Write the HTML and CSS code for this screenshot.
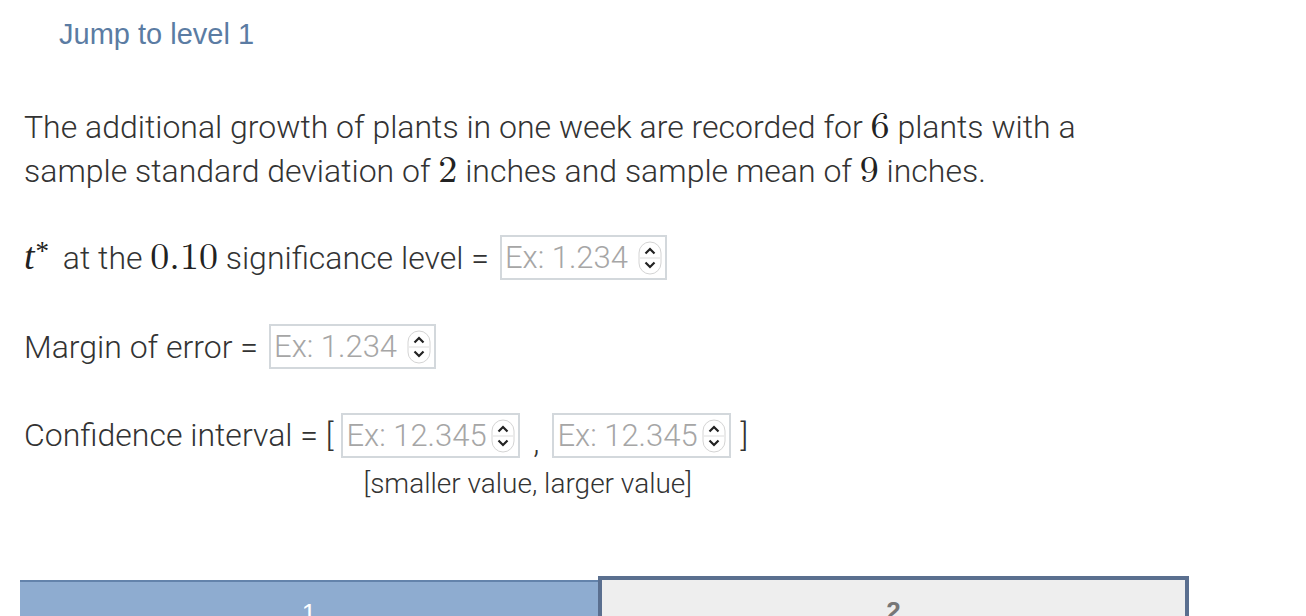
FILE: index.html
```html
<!DOCTYPE html>
<html>
<head>
<meta charset="utf-8">
<link rel="stylesheet" href="styles.css">
</head>
<body>
<div class="page">
  <div class="jump"><a class="jump-link">Jump to level 1</a></div>
  <p class="prompt">The additional growth of plants in one week are recorded for <span class="m">6</span> plants with a<br>sample standard deviation of <span class="m">2</span> inches and sample mean of <span class="m">9</span> inches.</p>

  <div class="row row-t">
    <span class="label"><span class="mi">t</span><sup class="star">*</sup> at the <span class="m">0.10</span> significance level =</span>
    <div class="field w1">
      <span class="ph">Ex: 1.234</span>
      <svg class="spin" viewBox="0 0 24 34" width="24" height="34"><rect x="1" y="1" width="22" height="32" rx="11" fill="#fff" stroke="#d4d4d4"/><line x1="2" y1="17" x2="22" y2="17" stroke="#ddd"/><path d="M7.5 12.5 L12 8 L16.5 12.5" fill="none" stroke="#222" stroke-width="2.2"/><path d="M7.5 21.5 L12 26 L16.5 21.5" fill="none" stroke="#222" stroke-width="2.2"/></svg>
    </div>
  </div>

  <div class="row row-m">
    <span class="label">Margin of error =</span>
    <div class="field w1">
      <span class="ph">Ex: 1.234</span>
      <svg class="spin" viewBox="0 0 24 34" width="24" height="34"><rect x="1" y="1" width="22" height="32" rx="11" fill="#fff" stroke="#d4d4d4"/><line x1="2" y1="17" x2="22" y2="17" stroke="#ddd"/><path d="M7.5 12.5 L12 8 L16.5 12.5" fill="none" stroke="#222" stroke-width="2.2"/><path d="M7.5 21.5 L12 26 L16.5 21.5" fill="none" stroke="#222" stroke-width="2.2"/></svg>
    </div>
  </div>

  <div class="row row-c">
    <span class="label lab-c">Confidence interval = [</span>
    <div class="pair">
      <div class="fields">
        <div class="field w2">
          <span class="ph">Ex: 12.345</span>
          <svg class="spin" viewBox="0 0 24 34" width="24" height="34"><rect x="1" y="1" width="22" height="32" rx="11" fill="#fff" stroke="#d4d4d4"/><line x1="2" y1="17" x2="22" y2="17" stroke="#ddd"/><path d="M7.5 12.5 L12 8 L16.5 12.5" fill="none" stroke="#222" stroke-width="2.2"/><path d="M7.5 21.5 L12 26 L16.5 21.5" fill="none" stroke="#222" stroke-width="2.2"/></svg>
        </div>
        <span class="comma">,</span>
        <div class="field w2">
          <span class="ph">Ex: 12.345</span>
          <svg class="spin" viewBox="0 0 24 34" width="24" height="34"><rect x="1" y="1" width="22" height="32" rx="11" fill="#fff" stroke="#d4d4d4"/><line x1="2" y1="17" x2="22" y2="17" stroke="#ddd"/><path d="M7.5 12.5 L12 8 L16.5 12.5" fill="none" stroke="#222" stroke-width="2.2"/><path d="M7.5 21.5 L12 26 L16.5 21.5" fill="none" stroke="#222" stroke-width="2.2"/></svg>
        </div>
        <span class="close">]</span>
      </div>
      <div class="hint">[smaller value, larger value]</div>
    </div>
  </div>

  <div class="tabs">
    <div class="tab tab-done">1</div>
    <div class="tab tab-current">2</div>
  </div>
</div>
</body>
</html>
```

FILE: styles.css
```css
html, body {
  margin: 0;
  padding: 0;
  background: #fff;
  overflow: hidden;
}
.page {
  width: 1306px;
  height: 616px;
  overflow: hidden;
  font-family: Roboto, "Liberation Sans", sans-serif;
  font-weight: 300;
  color: #333;
  font-size: 32px;
}
.jump {
  padding: 14px 0 0 59px;
  height: 43px;
}
.jump-link {
  font-family: "Liberation Sans", Arial, sans-serif;
  font-weight: 400;
  font-size: 29px;
  color: #5b7ca3;
  line-height: 34px;
}
.prompt {
  margin: 48px 0 0 24px;
  width: 1200px;
  line-height: 44px;
}
.m {
  font-family: "Latin Modern Roman", "Liberation Serif", serif;
  font-weight: 400;
  font-size: 38px;
  line-height: 0;
  color: #222;
}
.mi {
  font-family: "Liberation Serif", serif;
  font-style: italic;
  font-weight: 400;
  font-size: 38px;
  line-height: 0;
  color: #222;
}
.star {
  font-family: "Liberation Serif", serif;
  font-weight: 400;
  font-size: 27px;
  vertical-align: 9px;
  line-height: 0;
  margin-left: 1px;
  margin-right: 6px;
  color: #222;
}
.row {
  display: flex;
  align-items: center;
  padding-left: 24px;
}
.row-t { margin-top: 42px; }
.row-m { margin-top: 44px; }
.row-c { margin-top: 44px; align-items: flex-start; }
.lab-c { height: 45px; line-height: 45px; }
.label { white-space: nowrap; }
.field {
  box-sizing: border-box;
  height: 45px;
  border: 2px solid #d3d8dc;
  display: flex;
  align-items: center;
  justify-content: space-between;
  padding: 0 3px 0 3px;
  margin-left: 11px;
  flex: none;
}
.w1 { width: 167px; }
.w2 { width: 179px; }
.fields {
  display: flex;
  align-items: center;
  height: 45px;
}
.fields .field { margin-left: 0; }
.pair {
  display: flex;
  flex-direction: column;
  margin-left: 8px;
}
.comma {
  width: 32px;
  text-align: center;
  line-height: 45px;
  position: relative;
  top: 7px;
}
.close { margin-left: 9px; line-height: 45px; }
.ph {
  color: #a6a6a6;
  font-size: 31px;
  white-space: nowrap;
}
.spin { flex: none; }
.hint {
  margin-top: 10px;
  padding-left: 22px;
  font-size: 28px;
  line-height: 32px;
  white-space: nowrap;
}
.tabs {
  display: flex;
  align-items: flex-end;
  margin-top: 76px;
  padding-left: 20px;
}
.tab {
  box-sizing: border-box;
  text-align: center;
  font-family: "Liberation Sans", Arial, sans-serif;
  font-size: 26px;
  padding-top: 16px;
  flex: none;
}
.tab-done {
  width: 578px;
  height: 40px;
  background: #8eacd0;
  border-top: 2px solid #6383ab;
  color: #fff;
}
.tab-current {
  width: 591px;
  height: 44px;
  background: #eeeeee;
  border: 4px solid #5a6f8f;
  border-bottom: none;
  color: #777;
  font-weight: 700;
}
```
